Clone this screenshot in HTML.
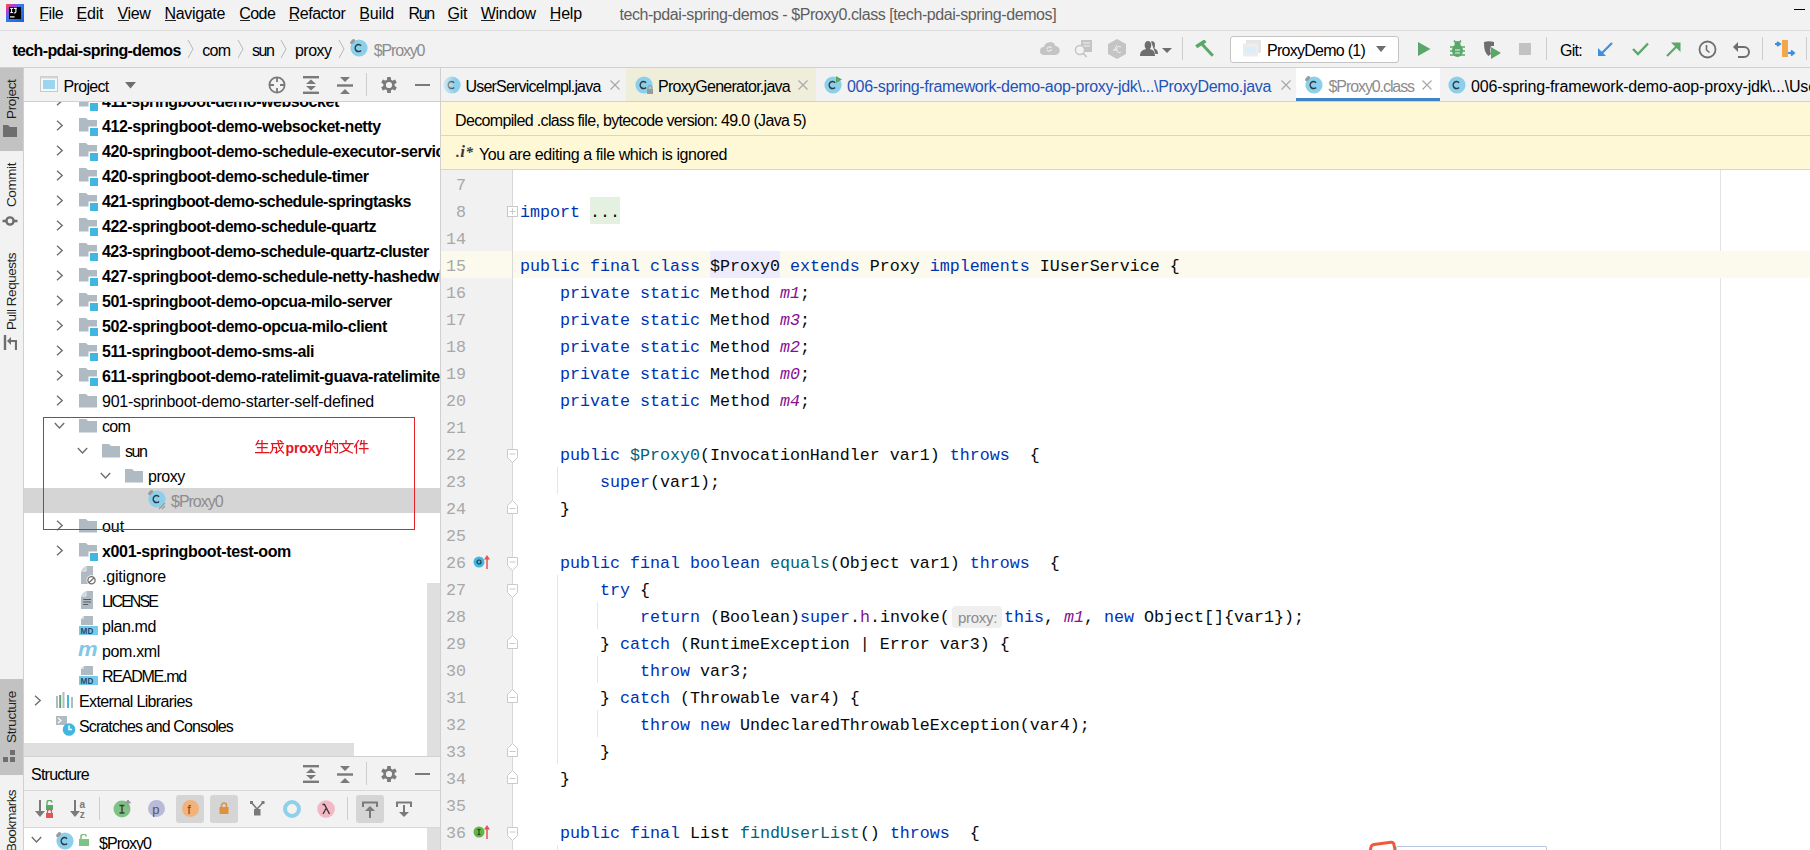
<!DOCTYPE html>
<html><head><meta charset="utf-8"><title>IntelliJ</title>
<style>
html,body{margin:0;padding:0;width:1810px;height:850px;overflow:hidden;background:#F2F2F2;}
body{position:relative;font-family:'Liberation Sans', sans-serif;}
div,svg{position:absolute;}
span{position:static;}
.t{white-space:pre;}
</style></head><body>
<div style="left:0px;top:0px;width:1810px;height:850px;background:#F2F2F2;"></div>
<div style="left:0px;top:30px;width:1810px;height:1px;background:#DCDCDC;"></div>
<div style="left:0px;top:67px;width:1810px;height:1px;background:#D0D0D0;"></div>
<svg style="left:6px;top:4px;" width="18" height="18" viewBox="0 0 18 18">
<defs><linearGradient id="ijg" x1="0" y1="0" x2="1" y2="1">
<stop offset="0" stop-color="#FF5A2A"/><stop offset="0.22" stop-color="#B83BD2"/><stop offset="0.45" stop-color="#3479EE"/><stop offset="1" stop-color="#1A5FE6"/></linearGradient></defs>
<rect x="0" y="0" width="18" height="18" fill="url(#ijg)"/>
<rect x="3" y="3" width="12" height="12" fill="#000"/>
<path d="M4.2,4.4 h2.8 M5.6,4.4 v4.4 M4.2,8.6 h2.8" stroke="#fff" stroke-width="1"/>
<path d="M7.8,4.4 h3 M9.9,4.4 v3.4 q0,1.2 -1.2,1.2 h-1" stroke="#fff" stroke-width="1.1" fill="none"/>
<rect x="4" y="12.3" width="4.6" height="1.2" fill="#fff"/>
</svg>
<div class="t" style="left:39.3px;top:3.96px;font:normal 400 16px/20px 'Liberation Sans', sans-serif;color:#000;letter-spacing:-0.470px;">File</div>
<div class="t" style="left:76.6px;top:3.96px;font:normal 400 16px/20px 'Liberation Sans', sans-serif;color:#000;letter-spacing:-0.220px;">Edit</div>
<div class="t" style="left:117.5px;top:3.96px;font:normal 400 16px/20px 'Liberation Sans', sans-serif;color:#000;letter-spacing:-0.348px;">View</div>
<div class="t" style="left:164.4px;top:3.96px;font:normal 400 16px/20px 'Liberation Sans', sans-serif;color:#000;letter-spacing:-0.307px;">Navigate</div>
<div class="t" style="left:239.3px;top:3.96px;font:normal 400 16px/20px 'Liberation Sans', sans-serif;color:#000;letter-spacing:-0.588px;">Code</div>
<div class="t" style="left:288.7px;top:3.96px;font:normal 400 16px/20px 'Liberation Sans', sans-serif;color:#000;letter-spacing:-0.484px;">Refactor</div>
<div class="t" style="left:359.2px;top:3.96px;font:normal 400 16px/20px 'Liberation Sans', sans-serif;color:#000;letter-spacing:-0.136px;">Build</div>
<div class="t" style="left:408.5px;top:3.96px;font:normal 400 16px/20px 'Liberation Sans', sans-serif;color:#000;letter-spacing:-1.320px;">Run</div>
<div class="t" style="left:447.5px;top:3.96px;font:normal 400 16px/20px 'Liberation Sans', sans-serif;color:#000;letter-spacing:-0.284px;">Git</div>
<div class="t" style="left:480.7px;top:3.96px;font:normal 400 16px/20px 'Liberation Sans', sans-serif;color:#000;letter-spacing:-0.284px;">Window</div>
<div class="t" style="left:549.8px;top:3.96px;font:normal 400 16px/20px 'Liberation Sans', sans-serif;color:#000;letter-spacing:-0.202px;">Help</div>
<div style="left:40px;top:20px;width:8px;height:1px;background:#222;"></div>
<div style="left:77px;top:20px;width:9px;height:1px;background:#222;"></div>
<div style="left:118px;top:20px;width:11px;height:1px;background:#222;"></div>
<div style="left:165px;top:20px;width:11px;height:1px;background:#222;"></div>
<div style="left:240px;top:20px;width:10px;height:1px;background:#222;"></div>
<div style="left:289px;top:20px;width:9px;height:1px;background:#222;"></div>
<div style="left:360px;top:20px;width:9px;height:1px;background:#222;"></div>
<div style="left:419px;top:20px;width:7px;height:1px;background:#222;"></div>
<div style="left:448px;top:20px;width:10px;height:1px;background:#222;"></div>
<div style="left:481px;top:20px;width:14px;height:1px;background:#222;"></div>
<div style="left:550px;top:20px;width:10px;height:1px;background:#222;"></div>
<div class="t" style="left:619.4px;top:4.66px;font:normal 400 16px/20px 'Liberation Sans', sans-serif;color:#5E5E5E;letter-spacing:-0.421px;">tech-pdai-spring-demos - $Proxy0.class [tech-pdai-spring-demos]</div>
<div style="left:1794px;top:9px;width:11px;height:1px;background:#000;"></div>
<div class="t" style="left:12.4px;top:40.66px;font:normal 700 16px/20px 'Liberation Sans', sans-serif;color:#000;letter-spacing:-0.633px;">tech-pdai-spring-demos</div>
<svg style="left:187px;top:39px;" width="7" height="20" viewBox="0 0 7 20"><polyline points="1,1 6,10 1,19" fill="none" stroke="#B8B8B8" stroke-width="1"/></svg>
<svg style="left:237px;top:39px;" width="7" height="20" viewBox="0 0 7 20"><polyline points="1,1 6,10 1,19" fill="none" stroke="#B8B8B8" stroke-width="1"/></svg>
<svg style="left:280px;top:39px;" width="7" height="20" viewBox="0 0 7 20"><polyline points="1,1 6,10 1,19" fill="none" stroke="#B8B8B8" stroke-width="1"/></svg>
<svg style="left:338px;top:39px;" width="7" height="20" viewBox="0 0 7 20"><polyline points="1,1 6,10 1,19" fill="none" stroke="#B8B8B8" stroke-width="1"/></svg>
<div class="t" style="left:202.2px;top:40.66px;font:normal 400 16px/20px 'Liberation Sans', sans-serif;color:#000;letter-spacing:-0.678px;">com</div>
<div class="t" style="left:252px;top:40.66px;font:normal 400 16px/20px 'Liberation Sans', sans-serif;color:#000;letter-spacing:-1.432px;">sun</div>
<div class="t" style="left:295px;top:40.66px;font:normal 400 16px/20px 'Liberation Sans', sans-serif;color:#000;letter-spacing:-0.525px;">proxy</div>
<div class="t" style="left:373.8px;top:40.66px;font:normal 400 16px/20px 'Liberation Sans', sans-serif;color:#8C8C8C;letter-spacing:-1.172px;">$Proxy0</div>
<svg style="left:349.7px;top:39px;opacity:1.0" width="19" height="19" viewBox="0 0 19 19"><circle cx="9.0" cy="9.0" r="8.6" fill="#8BCFEA"/><path d="M11.0,6.8 A3.3,3.5 0 1 0 11.0,11.4" fill="none" stroke="#2F3A42" stroke-width="1.5"/><ellipse cx="2.6" cy="2.6" rx="3" ry="1.7" transform="rotate(-45 2.6 2.6)" fill="#9A9A9A"/></svg>
<svg style="left:1039px;top:41px;" width="21" height="15" viewBox="0 0 21 15"><path d="M5,14 h11 a4.5,4.5 0 0 0 0.5,-9 a6,6 0 0 0 -11.5,1 a4,4 0 0 0 0,8 z" fill="#C4C4C4"/><path d="M8,8 a2.5,2.5 0 0 1 4.5,-1 M12.5,8 a2.5,2.5 0 0 1 -4.5,1" stroke="#ECECEC" stroke-width="1.2" fill="none"/></svg>
<svg style="left:1074px;top:40px;" width="19" height="18" viewBox="0 0 19 18"><rect x="7" y="0" width="11" height="12" fill="#C4C4C4"/><path d="M9,3 h7 M9,6 h7" stroke="#F2F2F2" stroke-width="1.2"/><circle cx="6" cy="10" r="4.6" fill="#F2F2F2" stroke="#C4C4C4" stroke-width="1.5"/><path d="M9,13 L12.5,17" stroke="#C4C4C4" stroke-width="1.8"/></svg>
<svg style="left:1108px;top:39px;" width="18" height="20" viewBox="0 0 18 20"><path d="M9,0 L18,5 L18,15 L9,20 L0,15 L0,5 Z" fill="#C4C4C4"/><path d="M6,12 L9,6 M5,11 h5 M13,8 a3,3 0 1 0 0,5" stroke="#ECECEC" stroke-width="1" fill="none"/></svg>
<svg style="left:1140px;top:40px;" width="34" height="17" viewBox="0 0 34 17"><path d="M0,16 C0,11 3,10 6,9 C4,7 4,1 8,1 C12,1 12,7 10,9 C13,10 15,11 15,16 Z" fill="#6E6E6E"/><path d="M11,1.5 C14,0.5 16,3 14.5,8.5 C17,9.5 18,11 18,14 L15.5,14" fill="#6E6E6E"/><path d="M22,8 h10 l-5,5 z" fill="#6E6E6E"/></svg>
<div style="left:1182px;top:37px;width:1px;height:23px;background:#CDCDCD;"></div>
<svg style="left:1195px;top:40px;" width="20" height="18" viewBox="0 0 20 18"><path d="M1.2,6.8 L10.5,0.8" stroke="#59A869" stroke-width="3.6"/><path d="M5.5,2.5 L17.8,15.8" stroke="#59A869" stroke-width="3"/></svg>
<div style="left:1229.5px;top:35.5px;width:169px;height:27px;background:#FFFFFF;border:1px solid #C4C4C4;border-radius:3px;box-sizing:border-box"></div>
<svg style="left:1243px;top:40px;" width="18" height="17" viewBox="0 0 18 17"><rect x="3" y="0" width="15" height="13" fill="#E6E6E6"/><rect x="0" y="3.5" width="15" height="13" fill="#EDEDED"/><rect x="2" y="7" width="11" height="7" fill="#DCEEF8"/></svg>
<div class="t" style="left:1267px;top:40.66px;font:normal 400 16px/20px 'Liberation Sans', sans-serif;color:#000;letter-spacing:-0.737px;">ProxyDemo (1)</div>
<svg style="left:1376px;top:46px;" width="10" height="7" viewBox="0 0 10 7"><path d="M0,0 h10 l-5,6 z" fill="#6E6E6E"/></svg>
<svg style="left:1418px;top:42px;" width="13" height="15" viewBox="0 0 13 15"><path d="M0,0 L12.5,7 L0,14 Z" fill="#59A869"/></svg>
<svg style="left:1449px;top:40px;" width="17" height="18" viewBox="0 0 17 18"><ellipse cx="8.5" cy="10.5" rx="5.5" ry="6.5" fill="#59A869"/><circle cx="8.5" cy="4" r="3" fill="#59A869"/><path d="M1,7 h15 M1,11 h15 M1,15 h15 M5,0.5 l2,2.5 M12,0.5 l-2,2.5" stroke="#59A869" stroke-width="1.6"/><path d="M6,10 h5 M6,13 h5" stroke="#F2F2F2" stroke-width="1.2"/></svg>
<svg style="left:1482px;top:41px;" width="20" height="19" viewBox="0 0 20 19"><path d="M2,1 C5,0 9,0 12,1 L12,5 L9,5 C8,8 8,11 9,13 L6.5,15 C3,12 2,8 2,1 Z" fill="#6E6E6E"/><path d="M9,6 L19,12 L9,18 Z" fill="#59A869"/></svg>
<div style="left:1519px;top:43px;width:12px;height:12px;background:#C2C2C2;"></div>
<div style="left:1546px;top:37px;width:1px;height:23px;background:#CDCDCD;"></div>
<div class="t" style="left:1560px;top:40.66px;font:normal 400 16px/20px 'Liberation Sans', sans-serif;color:#000;letter-spacing:-0.723px;">Git:</div>
<svg style="left:1598px;top:42px;" width="15" height="14" viewBox="0 0 15 14"><path d="M14,1 L3,12" stroke="#3C8FE0" stroke-width="2.2"/><path d="M0,6 L0,14 L8,14 Z" fill="#3C8FE0"/></svg>
<svg style="left:1632px;top:42px;" width="17" height="14" viewBox="0 0 17 14"><path d="M1,7 L6,12 L16,1.5" stroke="#59A869" stroke-width="2.4" fill="none"/></svg>
<svg style="left:1666px;top:42px;" width="15" height="15" viewBox="0 0 15 15"><path d="M1,14 L12,3" stroke="#59A869" stroke-width="2.2"/><path d="M5,0.5 L14.5,0.5 L14.5,10 Z" fill="#59A869"/></svg>
<svg style="left:1698px;top:40px;" width="19" height="19" viewBox="0 0 19 19"><circle cx="9.5" cy="9.5" r="8" fill="none" stroke="#6E6E6E" stroke-width="1.8"/><path d="M8.5,5 L8.5,10 L11.5,12.5" stroke="#6E6E6E" stroke-width="1.6" fill="none"/></svg>
<svg style="left:1733px;top:41px;" width="18" height="17" viewBox="0 0 18 17"><path d="M4,6 L11,6 A5,5 0 0 1 11,16 L5,16" fill="none" stroke="#6E6E6E" stroke-width="2"/><path d="M0,6 L5,1 L5,11 Z" fill="#6E6E6E"/></svg>
<div style="left:1762px;top:37px;width:1px;height:23px;background:#CDCDCD;"></div>
<svg style="left:1775px;top:40px;" width="21" height="18" viewBox="0 0 21 18"><rect x="7" y="0" width="6" height="17" fill="#F0A84B"/><path d="M0,4 h4 M2,2 l3,2 -3,2" stroke="#3C8FE0" stroke-width="2" fill="none"/><path d="M13,13 h5 M16,10.5 l3,2.5 -3,2.5" stroke="#3C8FE0" stroke-width="2" fill="none"/></svg>
<div style="left:1806px;top:37px;width:1px;height:23px;background:#CDCDCD;"></div>
<div style="left:23px;top:68px;width:1px;height:782px;background:#D0D0D0;"></div>
<div style="left:0px;top:68px;width:23px;height:83px;background:#C2C2C2;"></div>
<div style="left:0px;top:679px;width:23px;height:96px;background:#C2C2C2;"></div>
<div class="t" style="left:12.02225px;top:118.50px;font:normal 400 13.5px/16px 'Liberation Sans', sans-serif;color:#1E1E1E;letter-spacing:-0.362px;transform-origin:0 0;transform:rotate(-90deg) translate(0,-8px)">Project</div>
<div class="t" style="left:12.02225px;top:207.00px;font:normal 400 13.5px/16px 'Liberation Sans', sans-serif;color:#1E1E1E;letter-spacing:-0.417px;transform-origin:0 0;transform:rotate(-90deg) translate(0,-8px)">Commit</div>
<div class="t" style="left:12.02225px;top:330.00px;font:normal 400 13.5px/16px 'Liberation Sans', sans-serif;color:#1E1E1E;letter-spacing:-0.484px;transform-origin:0 0;transform:rotate(-90deg) translate(0,-8px)">Pull Requests</div>
<div class="t" style="left:12.02225px;top:743.00px;font:normal 400 13.5px/16px 'Liberation Sans', sans-serif;color:#1E1E1E;letter-spacing:-0.309px;transform-origin:0 0;transform:rotate(-90deg) translate(0,-8px)">Structure</div>
<div class="t" style="left:12.02225px;top:852.00px;font:normal 400 13.5px/16px 'Liberation Sans', sans-serif;color:#1E1E1E;letter-spacing:-0.615px;transform-origin:0 0;transform:rotate(-90deg) translate(0,-8px)">Bookmarks</div>
<svg style="left:3px;top:125px;" width="14" height="12" viewBox="0 0 14 12"><path d="M0,0 h5 l2,2 h7 v10 h-14 z" fill="#6E6E6E"/></svg>
<svg style="left:2px;top:214px;" width="16" height="14" viewBox="0 0 16 14"><circle cx="8" cy="7" r="3.6" fill="none" stroke="#6E6E6E" stroke-width="2.4"/><path d="M0.5,7 h4 M11.5,7 h4" stroke="#6E6E6E" stroke-width="2.4"/></svg>
<svg style="left:3px;top:335px;" width="14" height="15" viewBox="0 0 14 15"><path d="M2,0 v15" stroke="#6E6E6E" stroke-width="2.4"/><path d="M5,6 h8 v9" stroke="#6E6E6E" stroke-width="2.2" fill="none"/><path d="M4,6 l4,-4 v8 z" fill="#6E6E6E"/></svg>
<svg style="left:3px;top:750px;" width="14" height="13" viewBox="0 0 14 13"><rect x="7" y="0" width="5" height="5" fill="#6E6E6E"/><rect x="0" y="7" width="5" height="5" fill="#6E6E6E"/><rect x="7" y="7" width="5" height="5" fill="#6E6E6E"/></svg>
<div style="left:24px;top:101px;width:416px;height:1px;background:#D0D0D0;"></div>
<div style="left:24px;top:102px;width:416px;height:654px;background:#FFFFFF;"></div>
<div style="left:440px;top:68px;width:1px;height:782px;background:#D0D0D0;"></div>
<svg style="left:40px;top:76px;" width="19" height="17" viewBox="0 0 19 17"><rect x="0.5" y="0.5" width="17" height="15" fill="#F7F7F7" stroke="#C9C9C9"/><rect x="0.5" y="0.5" width="17" height="2" fill="#D5D5D5"/><rect x="3" y="4" width="12" height="9" fill="#9BD5EF"/></svg>
<div class="t" style="left:63.5px;top:76.66px;font:normal 400 16px/20px 'Liberation Sans', sans-serif;color:#000;letter-spacing:-0.671px;">Project</div>
<svg style="left:124.5px;top:82px;" width="11" height="7" viewBox="0 0 11 7"><path d="M0,0 h11 l-5.5,6.5 z" fill="#6E6E6E"/></svg>
<svg style="left:268px;top:76px;" width="18" height="18" viewBox="0 0 18 18"><circle cx="9" cy="9" r="7.6" fill="none" stroke="#7A7A7A" stroke-width="1.8"/><path d="M9,1 v5 M9,12 v5 M1,9 h5 M12,9 h5" stroke="#7A7A7A" stroke-width="1.8"/></svg>
<svg style="left:303px;top:76px;" width="16" height="18" viewBox="0 0 16 18"><rect x="0" y="0" width="16" height="2.4" fill="#7A7A7A"/><rect x="0" y="15.6" width="16" height="2.4" fill="#7A7A7A"/><path d="M3,8 L8,3.5 L13,8 Z M3,10 L8,14.5 L13,10 Z" fill="#7A7A7A"/></svg>
<svg style="left:337px;top:77px;" width="16" height="17" viewBox="0 0 16 17"><rect x="0" y="7.3" width="16" height="2.4" fill="#7A7A7A"/><path d="M3,0 L13,0 L8,5 Z M3,17 L8,12 L13,17 Z" fill="#7A7A7A"/></svg>
<div style="left:366px;top:73px;width:1px;height:23px;background:#CDCDCD;"></div>
<svg style="left:381px;top:77px;" width="16" height="16" viewBox="0 0 16 16"><g transform="translate(8,8)" fill="#7A7A7A"><rect x="-1.9" y="-8" width="3.8" height="4.5" rx="0.6" transform="rotate(0)"/><rect x="-1.9" y="-8" width="3.8" height="4.5" rx="0.6" transform="rotate(60)"/><rect x="-1.9" y="-8" width="3.8" height="4.5" rx="0.6" transform="rotate(120)"/><rect x="-1.9" y="-8" width="3.8" height="4.5" rx="0.6" transform="rotate(180)"/><rect x="-1.9" y="-8" width="3.8" height="4.5" rx="0.6" transform="rotate(240)"/><rect x="-1.9" y="-8" width="3.8" height="4.5" rx="0.6" transform="rotate(300)"/><circle r="5.7"/></g><circle cx="8" cy="8" r="3.1" fill="#F2F2F2"/></svg>
<div style="left:415px;top:84px;width:15px;height:2.4px;background:#7A7A7A;"></div>
<div style="left:24px;top:488px;width:416px;height:25px;background:#D5D5D5;"></div>
<div style="left:24px;top:102px;width:416px;height:641px;overflow:hidden">
<svg style="left:31.799999999999997px;top:-7px;" width="8" height="11" viewBox="0 0 8 11"><polyline points="1,0.8 6.2,5.5 1,10.2" fill="none" stroke="#6E6E6E" stroke-width="1.4"/></svg>
<svg style="left:55px;top:-9.5px;" width="20" height="18" viewBox="0 0 20 18"><path d="M0,0 h7 l2,2 h9 v11.5 h-18 z" fill="#AFBAC2"/><rect x="9.5" y="8.5" width="10" height="9.5" fill="#FFFFFF"/><rect x="11" y="10" width="8" height="8" fill="#40B6E0"/></svg>
<div class="t" style="left:78px;top:-9.84px;font:normal 700 16px/20px 'Liberation Sans', sans-serif;color:#000;letter-spacing:-0.450px;white-space:pre">411-springboot-demo-websocket</div>
<svg style="left:31.799999999999997px;top:18px;" width="8" height="11" viewBox="0 0 8 11"><polyline points="1,0.8 6.2,5.5 1,10.2" fill="none" stroke="#6E6E6E" stroke-width="1.4"/></svg>
<svg style="left:55px;top:15.5px;" width="20" height="18" viewBox="0 0 20 18"><path d="M0,0 h7 l2,2 h9 v11.5 h-18 z" fill="#AFBAC2"/><rect x="9.5" y="8.5" width="10" height="9.5" fill="#FFFFFF"/><rect x="11" y="10" width="8" height="8" fill="#40B6E0"/></svg>
<div class="t" style="left:78px;top:15.16px;font:normal 700 16px/20px 'Liberation Sans', sans-serif;color:#000;letter-spacing:-0.448px;white-space:pre">412-springboot-demo-websocket-netty</div>
<svg style="left:31.799999999999997px;top:43px;" width="8" height="11" viewBox="0 0 8 11"><polyline points="1,0.8 6.2,5.5 1,10.2" fill="none" stroke="#6E6E6E" stroke-width="1.4"/></svg>
<svg style="left:55px;top:40.5px;" width="20" height="18" viewBox="0 0 20 18"><path d="M0,0 h7 l2,2 h9 v11.5 h-18 z" fill="#AFBAC2"/><rect x="9.5" y="8.5" width="10" height="9.5" fill="#FFFFFF"/><rect x="11" y="10" width="8" height="8" fill="#40B6E0"/></svg>
<div class="t" style="left:78px;top:40.16px;font:normal 700 16px/20px 'Liberation Sans', sans-serif;color:#000;letter-spacing:-0.450px;white-space:pre">420-springboot-demo-schedule-executor-service</div>
<svg style="left:31.799999999999997px;top:68px;" width="8" height="11" viewBox="0 0 8 11"><polyline points="1,0.8 6.2,5.5 1,10.2" fill="none" stroke="#6E6E6E" stroke-width="1.4"/></svg>
<svg style="left:55px;top:65.5px;" width="20" height="18" viewBox="0 0 20 18"><path d="M0,0 h7 l2,2 h9 v11.5 h-18 z" fill="#AFBAC2"/><rect x="9.5" y="8.5" width="10" height="9.5" fill="#FFFFFF"/><rect x="11" y="10" width="8" height="8" fill="#40B6E0"/></svg>
<div class="t" style="left:78px;top:65.16px;font:normal 700 16px/20px 'Liberation Sans', sans-serif;color:#000;letter-spacing:-0.480px;white-space:pre">420-springboot-demo-schedule-timer</div>
<svg style="left:31.799999999999997px;top:93px;" width="8" height="11" viewBox="0 0 8 11"><polyline points="1,0.8 6.2,5.5 1,10.2" fill="none" stroke="#6E6E6E" stroke-width="1.4"/></svg>
<svg style="left:55px;top:90.5px;" width="20" height="18" viewBox="0 0 20 18"><path d="M0,0 h7 l2,2 h9 v11.5 h-18 z" fill="#AFBAC2"/><rect x="9.5" y="8.5" width="10" height="9.5" fill="#FFFFFF"/><rect x="11" y="10" width="8" height="8" fill="#40B6E0"/></svg>
<div class="t" style="left:78px;top:90.16px;font:normal 700 16px/20px 'Liberation Sans', sans-serif;color:#000;letter-spacing:-0.615px;white-space:pre">421-springboot-demo-schedule-springtasks</div>
<svg style="left:31.799999999999997px;top:118px;" width="8" height="11" viewBox="0 0 8 11"><polyline points="1,0.8 6.2,5.5 1,10.2" fill="none" stroke="#6E6E6E" stroke-width="1.4"/></svg>
<svg style="left:55px;top:115.5px;" width="20" height="18" viewBox="0 0 20 18"><path d="M0,0 h7 l2,2 h9 v11.5 h-18 z" fill="#AFBAC2"/><rect x="9.5" y="8.5" width="10" height="9.5" fill="#FFFFFF"/><rect x="11" y="10" width="8" height="8" fill="#40B6E0"/></svg>
<div class="t" style="left:78px;top:115.16px;font:normal 700 16px/20px 'Liberation Sans', sans-serif;color:#000;letter-spacing:-0.502px;white-space:pre">422-springboot-demo-schedule-quartz</div>
<svg style="left:31.799999999999997px;top:143px;" width="8" height="11" viewBox="0 0 8 11"><polyline points="1,0.8 6.2,5.5 1,10.2" fill="none" stroke="#6E6E6E" stroke-width="1.4"/></svg>
<svg style="left:55px;top:140.5px;" width="20" height="18" viewBox="0 0 20 18"><path d="M0,0 h7 l2,2 h9 v11.5 h-18 z" fill="#AFBAC2"/><rect x="9.5" y="8.5" width="10" height="9.5" fill="#FFFFFF"/><rect x="11" y="10" width="8" height="8" fill="#40B6E0"/></svg>
<div class="t" style="left:78px;top:140.16px;font:normal 700 16px/20px 'Liberation Sans', sans-serif;color:#000;letter-spacing:-0.530px;white-space:pre">423-springboot-demo-schedule-quartz-cluster</div>
<svg style="left:31.799999999999997px;top:168px;" width="8" height="11" viewBox="0 0 8 11"><polyline points="1,0.8 6.2,5.5 1,10.2" fill="none" stroke="#6E6E6E" stroke-width="1.4"/></svg>
<svg style="left:55px;top:165.5px;" width="20" height="18" viewBox="0 0 20 18"><path d="M0,0 h7 l2,2 h9 v11.5 h-18 z" fill="#AFBAC2"/><rect x="9.5" y="8.5" width="10" height="9.5" fill="#FFFFFF"/><rect x="11" y="10" width="8" height="8" fill="#40B6E0"/></svg>
<div class="t" style="left:78px;top:165.16px;font:normal 700 16px/20px 'Liberation Sans', sans-serif;color:#000;letter-spacing:-0.450px;white-space:pre">427-springboot-demo-schedule-netty-hashedwheeltimer</div>
<svg style="left:31.799999999999997px;top:193px;" width="8" height="11" viewBox="0 0 8 11"><polyline points="1,0.8 6.2,5.5 1,10.2" fill="none" stroke="#6E6E6E" stroke-width="1.4"/></svg>
<svg style="left:55px;top:190.5px;" width="20" height="18" viewBox="0 0 20 18"><path d="M0,0 h7 l2,2 h9 v11.5 h-18 z" fill="#AFBAC2"/><rect x="9.5" y="8.5" width="10" height="9.5" fill="#FFFFFF"/><rect x="11" y="10" width="8" height="8" fill="#40B6E0"/></svg>
<div class="t" style="left:78px;top:190.16px;font:normal 700 16px/20px 'Liberation Sans', sans-serif;color:#000;letter-spacing:-0.481px;white-space:pre">501-springboot-demo-opcua-milo-server</div>
<svg style="left:31.799999999999997px;top:218px;" width="8" height="11" viewBox="0 0 8 11"><polyline points="1,0.8 6.2,5.5 1,10.2" fill="none" stroke="#6E6E6E" stroke-width="1.4"/></svg>
<svg style="left:55px;top:215.5px;" width="20" height="18" viewBox="0 0 20 18"><path d="M0,0 h7 l2,2 h9 v11.5 h-18 z" fill="#AFBAC2"/><rect x="9.5" y="8.5" width="10" height="9.5" fill="#FFFFFF"/><rect x="11" y="10" width="8" height="8" fill="#40B6E0"/></svg>
<div class="t" style="left:78px;top:215.16px;font:normal 700 16px/20px 'Liberation Sans', sans-serif;color:#000;letter-spacing:-0.447px;white-space:pre">502-springboot-demo-opcua-milo-client</div>
<svg style="left:31.799999999999997px;top:243px;" width="8" height="11" viewBox="0 0 8 11"><polyline points="1,0.8 6.2,5.5 1,10.2" fill="none" stroke="#6E6E6E" stroke-width="1.4"/></svg>
<svg style="left:55px;top:240.5px;" width="20" height="18" viewBox="0 0 20 18"><path d="M0,0 h7 l2,2 h9 v11.5 h-18 z" fill="#AFBAC2"/><rect x="9.5" y="8.5" width="10" height="9.5" fill="#FFFFFF"/><rect x="11" y="10" width="8" height="8" fill="#40B6E0"/></svg>
<div class="t" style="left:78px;top:240.16px;font:normal 700 16px/20px 'Liberation Sans', sans-serif;color:#000;letter-spacing:-0.413px;white-space:pre">511-springboot-demo-sms-ali</div>
<svg style="left:31.799999999999997px;top:268px;" width="8" height="11" viewBox="0 0 8 11"><polyline points="1,0.8 6.2,5.5 1,10.2" fill="none" stroke="#6E6E6E" stroke-width="1.4"/></svg>
<svg style="left:55px;top:265.5px;" width="20" height="18" viewBox="0 0 20 18"><path d="M0,0 h7 l2,2 h9 v11.5 h-18 z" fill="#AFBAC2"/><rect x="9.5" y="8.5" width="10" height="9.5" fill="#FFFFFF"/><rect x="11" y="10" width="8" height="8" fill="#40B6E0"/></svg>
<div class="t" style="left:78px;top:265.16px;font:normal 700 16px/20px 'Liberation Sans', sans-serif;color:#000;letter-spacing:-0.450px;white-space:pre">611-springboot-demo-ratelimit-guava-ratelimiter</div>
<svg style="left:31.799999999999997px;top:293px;" width="8" height="11" viewBox="0 0 8 11"><polyline points="1,0.8 6.2,5.5 1,10.2" fill="none" stroke="#6E6E6E" stroke-width="1.4"/></svg>
<svg style="left:55px;top:291.5px;" width="20" height="18" viewBox="0 0 20 18"><path d="M0,0 h7 l2,2 h9 v11.5 h-18 z" fill="#AFBAC2"/></svg>
<div class="t" style="left:78px;top:290.16px;font:normal 400 16px/20px 'Liberation Sans', sans-serif;color:#000;letter-spacing:-0.254px;white-space:pre">901-sprinboot-demo-starter-self-defined</div>
<svg style="left:30px;top:320px;" width="12" height="8" viewBox="0 0 12 8"><polyline points="0.8,1 5.5,6 10.2,1" fill="none" stroke="#6E6E6E" stroke-width="1.4"/></svg>
<svg style="left:55px;top:316.5px;" width="20" height="18" viewBox="0 0 20 18"><path d="M0,0 h7 l2,2 h9 v11.5 h-18 z" fill="#AFBAC2"/></svg>
<div class="t" style="left:78px;top:315.16px;font:normal 400 16px/20px 'Liberation Sans', sans-serif;color:#000;letter-spacing:-0.745px;white-space:pre">com</div>
<svg style="left:53px;top:345px;" width="12" height="8" viewBox="0 0 12 8"><polyline points="0.8,1 5.5,6 10.2,1" fill="none" stroke="#6E6E6E" stroke-width="1.4"/></svg>
<svg style="left:78px;top:341.5px;" width="20" height="18" viewBox="0 0 20 18"><path d="M0,0 h7 l2,2 h9 v11.5 h-18 z" fill="#AFBAC2"/></svg>
<div class="t" style="left:101px;top:340.16px;font:normal 400 16px/20px 'Liberation Sans', sans-serif;color:#000;letter-spacing:-1.432px;white-space:pre">sun</div>
<svg style="left:76px;top:370px;" width="12" height="8" viewBox="0 0 12 8"><polyline points="0.8,1 5.5,6 10.2,1" fill="none" stroke="#6E6E6E" stroke-width="1.4"/></svg>
<svg style="left:101px;top:366.5px;" width="20" height="18" viewBox="0 0 20 18"><path d="M0,0 h7 l2,2 h9 v11.5 h-18 z" fill="#AFBAC2"/></svg>
<div class="t" style="left:124px;top:365.16px;font:normal 400 16px/20px 'Liberation Sans', sans-serif;color:#000;letter-spacing:-0.485px;white-space:pre">proxy</div>
<svg style="left:123.5px;top:388px;opacity:1.0" width="19" height="19" viewBox="0 0 19 19"><circle cx="9.0" cy="9.0" r="8.6" fill="#8BCFEA"/><path d="M11.0,6.8 A3.3,3.5 0 1 0 11.0,11.4" fill="none" stroke="#2F3A42" stroke-width="1.5"/><ellipse cx="2.6" cy="2.6" rx="3" ry="1.7" transform="rotate(-45 2.6 2.6)" fill="#9A9A9A"/></svg>
<svg style="left:134px;top:400px;" width="8" height="8" viewBox="0 0 8 8"><path d="M1,7 L7,1 M4,7 L7,4" stroke="#9A9A9A" stroke-width="1.3"/></svg>
<div class="t" style="left:147px;top:390.16px;font:normal 400 16px/20px 'Liberation Sans', sans-serif;color:#8C8C8C;letter-spacing:-1.015px;white-space:pre">$Proxy0</div>
<svg style="left:31.799999999999997px;top:418px;" width="8" height="11" viewBox="0 0 8 11"><polyline points="1,0.8 6.2,5.5 1,10.2" fill="none" stroke="#6E6E6E" stroke-width="1.4"/></svg>
<svg style="left:55px;top:416.5px;" width="20" height="18" viewBox="0 0 20 18"><path d="M0,0 h7 l2,2 h9 v11.5 h-18 z" fill="#AFBAC2"/></svg>
<div class="t" style="left:78px;top:415.16px;font:normal 400 16px/20px 'Liberation Sans', sans-serif;color:#000;letter-spacing:-0.083px;white-space:pre">out</div>
<svg style="left:31.799999999999997px;top:443px;" width="8" height="11" viewBox="0 0 8 11"><polyline points="1,0.8 6.2,5.5 1,10.2" fill="none" stroke="#6E6E6E" stroke-width="1.4"/></svg>
<svg style="left:55px;top:440.5px;" width="20" height="18" viewBox="0 0 20 18"><path d="M0,0 h7 l2,2 h9 v11.5 h-18 z" fill="#AFBAC2"/><rect x="9.5" y="8.5" width="10" height="9.5" fill="#FFFFFF"/><rect x="11" y="10" width="8" height="8" fill="#40B6E0"/></svg>
<div class="t" style="left:78px;top:440.16px;font:normal 700 16px/20px 'Liberation Sans', sans-serif;color:#000;letter-spacing:-0.348px;white-space:pre">x001-springboot-test-oom</div>
<svg style="left:57px;top:464px;" width="18" height="20" viewBox="0 0 18 20"><path d="M0,5 L5,0 L12,0 L12,18 L0,18 Z" fill="#AFBAC2"/><path d="M0,4.2 L4.2,0 L4.2,4.2 Z" fill="#D0D6DB"/><path d="M0,5 h5 v-5" stroke="#FFFFFF" stroke-width="0.8" fill="none"/><circle cx="10.5" cy="14.3" r="5" fill="#FFFFFF"/><circle cx="10.5" cy="14.3" r="3.6" fill="none" stroke="#6E6E6E" stroke-width="1.3"/><path d="M8,16.8 L13,11.8" stroke="#6E6E6E" stroke-width="1.3"/></svg>
<div class="t" style="left:78px;top:465.16px;font:normal 400 16px/20px 'Liberation Sans', sans-serif;color:#000;letter-spacing:-0.183px;white-space:pre">.gitignore</div>
<svg style="left:57px;top:489px;" width="14" height="20" viewBox="0 0 14 20"><path d="M0,5 L5,0 L12,0 L12,18 L0,18 Z" fill="#AFBAC2"/><path d="M0,4.2 L4.2,0 L4.2,4.2 Z" fill="#D0D6DB"/><path d="M0,5 h5 v-5" stroke="#FFFFFF" stroke-width="0.8" fill="none"/><path d="M2.2,8.5 h7.8 M2.2,11 h7.8 M2.2,13.5 h5" stroke="#555C63" stroke-width="1.1"/></svg>
<div class="t" style="left:78px;top:490.16px;font:normal 400 16px/20px 'Liberation Sans', sans-serif;color:#000;letter-spacing:-1.924px;white-space:pre">LICENSE</div>
<svg style="left:54px;top:514px;" width="21" height="19" viewBox="0 0 21 19"><path d="M3,3 L6,0 L15,0 L15,9 L3,9 Z" fill="#AFBAC2"/><path d="M3,3 L6,0 L6,3 Z" fill="#D8DDE1"/><rect x="1" y="10" width="19" height="9" fill="#5FC1E6" opacity="0.85"/><text x="2.6" y="17.8" font-family="Liberation Sans" font-size="8.2" font-weight="700" fill="#2B4A66">MD</text></svg>
<div class="t" style="left:78px;top:515.16px;font:normal 400 16px/20px 'Liberation Sans', sans-serif;color:#000;letter-spacing:-0.417px;white-space:pre">plan.md</div>
<svg style="left:54px;top:540px;" width="21" height="16" viewBox="0 0 21 16"><text x="0" y="13.5" font-family="Liberation Sans" font-style="italic" font-weight="700" font-size="21" fill="#7FC8E8" transform="scale(1.05,1)">m</text></svg>
<div class="t" style="left:78px;top:540.16px;font:normal 400 16px/20px 'Liberation Sans', sans-serif;color:#000;letter-spacing:-0.350px;white-space:pre">pom.xml</div>
<svg style="left:54px;top:564px;" width="21" height="19" viewBox="0 0 21 19"><path d="M3,3 L6,0 L15,0 L15,9 L3,9 Z" fill="#AFBAC2"/><path d="M3,3 L6,0 L6,3 Z" fill="#D8DDE1"/><rect x="1" y="10" width="19" height="9" fill="#5FC1E6" opacity="0.85"/><text x="2.6" y="17.8" font-family="Liberation Sans" font-size="8.2" font-weight="700" fill="#2B4A66">MD</text></svg>
<div class="t" style="left:78px;top:565.16px;font:normal 400 16px/20px 'Liberation Sans', sans-serif;color:#000;letter-spacing:-1.236px;white-space:pre">README.md</div>
<svg style="left:9.799999999999997px;top:593px;" width="8" height="11" viewBox="0 0 8 11"><polyline points="1,0.8 6.2,5.5 1,10.2" fill="none" stroke="#6E6E6E" stroke-width="1.4"/></svg>
<svg style="left:32px;top:590px;" width="18" height="16" viewBox="0 0 18 16"><path d="M1,4 v12 M7.5,0 v16 M16,5 v11" stroke="#AFBAC2" stroke-width="2"/><path d="M4.2,3 v13" stroke="#59A869" stroke-width="2"/><path d="M12,3 v13" stroke="#40B6E0" stroke-width="2"/></svg>
<div class="t" style="left:55px;top:590.16px;font:normal 400 16px/20px 'Liberation Sans', sans-serif;color:#000;letter-spacing:-0.639px;white-space:pre">External Libraries</div>
<svg style="left:32px;top:614px;" width="20" height="20" viewBox="0 0 20 20"><path d="M0,0 h11 v9 h-11 z" fill="#AFBAC2"/><path d="M2,2 l3,2.5 -3,2.5" stroke="#fff" stroke-width="1.2" fill="none"/><circle cx="13" cy="13.5" r="6.3" fill="#40B6E0"/><path d="M13,9.5 v4 h3" stroke="#fff" stroke-width="1.5" fill="none"/></svg>
<div class="t" style="left:55px;top:615.16px;font:normal 400 16px/20px 'Liberation Sans', sans-serif;color:#000;letter-spacing:-0.884px;white-space:pre">Scratches and Consoles</div>
</div>
<div style="left:427px;top:583px;width:13px;height:173px;background:#DFDFDF;"></div>
<div style="left:24px;top:743px;width:330px;height:13px;background:#DFDFDF;"></div>
<svg style="left:254.5px;top:440px;" width="15" height="14" viewBox="0 0 15 14"><path d="M3.5,0.5 L1,5 M2,3.5 H12.5 M7,0.5 V12.5 M2.5,7.5 H12 M0.5,12.5 H14" fill="none" stroke="#E5141E" stroke-width="1.25" stroke-linecap="square"/></svg>
<svg style="left:270px;top:440px;" width="15" height="14" viewBox="0 0 15 14"><path d="M1.5,3.5 H13.5 M2.5,3.5 V9 Q2.5,11 0.5,13 M2.5,7.5 H6.5 V12 L5.5,12.5 M8,0.5 Q8.5,9 13.5,13 M12.5,6 Q10,11 6.5,13 M10,0.5 L12,2" fill="none" stroke="#E5141E" stroke-width="1.25" stroke-linecap="square"/></svg>
<div class="t" style="left:285.5px;top:438.35px;font:normal 700 14px/20px 'Liberation Sans', sans-serif;color:#E5141E;letter-spacing:-0.125px;">proxy</div>
<svg style="left:324px;top:440px;" width="15" height="14" viewBox="0 0 15 14"><path d="M3.5,0.5 L2.5,3 M1.5,3.5 V12.5 M1.5,3.5 H6.5 V12.5 M1.5,7.5 H6.5 M1.5,12 H6.5 M9.5,0.5 L8,5 M8.5,3.5 H13.5 V12 Q13.5,13 11,12.5 M10,6.5 L11.5,8.5" fill="none" stroke="#E5141E" stroke-width="1.25" stroke-linecap="square"/></svg>
<svg style="left:339px;top:440px;" width="15" height="14" viewBox="0 0 15 14"><path d="M7,0.5 V2.5 M0.5,3.5 H14 M3.5,4 Q6,11 13.5,13 M11,4 Q8.5,11 0.5,13" fill="none" stroke="#E5141E" stroke-width="1.25" stroke-linecap="square"/></svg>
<svg style="left:354px;top:440px;" width="15" height="14" viewBox="0 0 15 14"><path d="M4.5,0.5 L0.5,7 M2.5,4 V13 M7.5,0.5 L6.5,4.5 M6.5,3.5 H13 M5.5,8.5 H14 M10,0.5 V13" fill="none" stroke="#E5141E" stroke-width="1.25" stroke-linecap="square"/></svg>
<div style="left:43px;top:417px;width:372px;height:113px;background:transparent;border:1.5px solid #E8202A;box-sizing:border-box"></div>
<div style="left:24px;top:756px;width:416px;height:1px;background:#D0D0D0;"></div>
<div class="t" style="left:31px;top:765.16px;font:normal 400 16px/20px 'Liberation Sans', sans-serif;color:#000;letter-spacing:-0.769px;">Structure</div>
<svg style="left:303px;top:765px;" width="16" height="18" viewBox="0 0 16 18"><rect x="0" y="0" width="16" height="2.4" fill="#7A7A7A"/><rect x="0" y="15.6" width="16" height="2.4" fill="#7A7A7A"/><path d="M3,8 L8,3.5 L13,8 Z M3,10 L8,14.5 L13,10 Z" fill="#7A7A7A"/></svg>
<svg style="left:337px;top:766px;" width="16" height="17" viewBox="0 0 16 17"><rect x="0" y="7.3" width="16" height="2.4" fill="#7A7A7A"/><path d="M3,0 L13,0 L8,5 Z M3,17 L8,12 L13,17 Z" fill="#7A7A7A"/></svg>
<div style="left:366px;top:762px;width:1px;height:23px;background:#CDCDCD;"></div>
<svg style="left:381px;top:766px;" width="16" height="16" viewBox="0 0 16 16"><g transform="translate(8,8)" fill="#7A7A7A"><rect x="-1.9" y="-8" width="3.8" height="4.5" rx="0.6" transform="rotate(0)"/><rect x="-1.9" y="-8" width="3.8" height="4.5" rx="0.6" transform="rotate(60)"/><rect x="-1.9" y="-8" width="3.8" height="4.5" rx="0.6" transform="rotate(120)"/><rect x="-1.9" y="-8" width="3.8" height="4.5" rx="0.6" transform="rotate(180)"/><rect x="-1.9" y="-8" width="3.8" height="4.5" rx="0.6" transform="rotate(240)"/><rect x="-1.9" y="-8" width="3.8" height="4.5" rx="0.6" transform="rotate(300)"/><circle r="5.7"/></g><circle cx="8" cy="8" r="3.1" fill="#F2F2F2"/></svg>
<div style="left:415px;top:773px;width:15px;height:2.4px;background:#7A7A7A;"></div>
<div style="left:24px;top:790px;width:416px;height:1px;background:#D8D8D8;"></div>
<div style="left:24px;top:827px;width:416px;height:1px;background:#D8D8D8;"></div>
<div style="left:24px;top:828px;width:416px;height:22px;background:#FFFFFF;"></div>
<div style="left:427px;top:828px;width:13px;height:22px;background:#DFDFDF;"></div>
<div style="left:176px;top:795px;width:28px;height:28px;background:#D5D5D5;border-radius:3px"></div>
<div style="left:210px;top:795px;width:28px;height:28px;background:#D5D5D5;border-radius:3px"></div>
<div style="left:356px;top:795px;width:28px;height:28px;background:#D5D5D5;border-radius:3px"></div>
<svg style="left:35px;top:800px;" width="19" height="18" viewBox="0 0 19 18"><path d="M5,0 v14" stroke="#7A7A7A" stroke-width="2"/><path d="M0,11 L5,17 L10,11 Z" fill="#7A7A7A"/><rect x="11" y="5" width="7" height="5" fill="#59A869"/><path d="M12,5 v-2 a2.5,2.5 0 0 1 5,-0.5" stroke="#59A869" stroke-width="1.3" fill="none"/><rect x="11" y="13" width="7" height="5" fill="#E05555"/><path d="M12.5,13 v-1.5 a2,2 0 0 1 4,0 v1.5" stroke="#E05555" stroke-width="1.3" fill="none"/></svg>
<svg style="left:70px;top:800px;" width="17" height="18" viewBox="0 0 17 18"><path d="M5,0 v14" stroke="#7A7A7A" stroke-width="2"/><path d="M0,11 L5,17 L10,11 Z" fill="#7A7A7A"/><text x="9.6" y="8.2" font-family="Liberation Sans" font-size="10" font-weight="700" fill="#7A7A7A">a</text><text x="9.8" y="17.8" font-family="Liberation Sans" font-size="10" font-weight="700" fill="#7A7A7A">z</text></svg>
<div style="left:99px;top:797px;width:1px;height:23px;background:#CDCDCD;"></div>
<svg style="left:113px;top:799px;" width="19" height="19" viewBox="0 0 19 19"><circle cx="9" cy="10" r="8.5" fill="#7FC285"/><path d="M6.5,6.5 h5 M9,6.5 v7.5 M6.5,14 h5" stroke="#3D3D3D" stroke-width="1.4"/><path d="M15,1 L17.5,4 L12.5,4 Z M15,3.5 v6" stroke="#9A9A9A" stroke-width="1" fill="#9A9A9A"/></svg>
<svg style="left:147px;top:799px;" width="19" height="19" viewBox="0 0 19 19"><circle cx="9.5" cy="9.5" r="8.5" fill="#B9B9D8"/><text x="5.2" y="14.5" font-family="Liberation Sans" font-size="13" fill="#555">p</text></svg>
<svg style="left:181px;top:799px;" width="19" height="19" viewBox="0 0 19 19"><circle cx="9.5" cy="9.5" r="8.5" fill="#F2B27A"/><text x="6.3" y="14.5" font-family="Liberation Sans" font-size="13" fill="#6A4A30">f</text></svg>
<svg style="left:219px;top:802px;" width="10" height="12" viewBox="0 0 10 12"><rect x="0.5" y="5" width="9" height="7" fill="#E0913A"/><path d="M2.5,5 v-1.5 a2.5,2.5 0 0 1 5,0 v1.5" stroke="#E0913A" stroke-width="1.5" fill="none"/></svg>
<svg style="left:250px;top:801px;" width="15" height="15" viewBox="0 0 15 15"><rect x="0" y="0" width="3" height="3" fill="#7A7A7A"/><rect x="11.5" y="0" width="3" height="3" fill="#7A7A7A"/><path d="M1.5,1.5 L7,8 L13,1.5" stroke="#7A7A7A" stroke-width="1.6" fill="none"/><rect x="4" y="8" width="6.5" height="6.5" fill="#7A7A7A"/></svg>
<svg style="left:283px;top:800px;" width="19" height="19" viewBox="0 0 19 19"><circle cx="9" cy="9" r="7" fill="none" stroke="#8FD1EA" stroke-width="4"/></svg>
<svg style="left:317px;top:800px;" width="19" height="19" viewBox="0 0 19 19"><circle cx="9" cy="9" r="8.8" fill="#F4B8C5"/><path d="M5.5,4.5 L7.5,4.5 L12.5,14 M9,8.5 L6,14" stroke="#333" stroke-width="1.3" fill="none"/></svg>
<div style="left:347px;top:797px;width:1px;height:23px;background:#CDCDCD;"></div>
<svg style="left:362px;top:801px;" width="16" height="17" viewBox="0 0 16 17"><path d="M1,6 v-4.5 h14 v4.5" stroke="#7A7A7A" stroke-width="2" fill="none"/><path d="M8,7 v10" stroke="#7A7A7A" stroke-width="2"/><path d="M3,10 L8,5 L13,10 Z" fill="#7A7A7A"/></svg>
<svg style="left:396px;top:801px;" width="16" height="17" viewBox="0 0 16 17"><path d="M1,6 v-4.5 h14 v4.5" stroke="#7A7A7A" stroke-width="2" fill="none"/><path d="M8,4 v9" stroke="#7A7A7A" stroke-width="2"/><path d="M3,11 L8,16 L13,11 Z" fill="#7A7A7A"/></svg>
<svg style="left:31px;top:836px;" width="12" height="8" viewBox="0 0 12 8"><polyline points="0.8,1 5.5,6 10.2,1" fill="none" stroke="#6E6E6E" stroke-width="1.4"/></svg>
<svg style="left:56px;top:832px;opacity:1.0" width="19" height="19" viewBox="0 0 19 19"><circle cx="9.0" cy="9.0" r="8.6" fill="#8BCFEA"/><path d="M11.0,6.8 A3.3,3.5 0 1 0 11.0,11.4" fill="none" stroke="#2F3A42" stroke-width="1.5"/><ellipse cx="2.6" cy="2.6" rx="3" ry="1.7" transform="rotate(-45 2.6 2.6)" fill="#9A9A9A"/></svg>
<svg style="left:78px;top:834px;" width="12" height="12" viewBox="0 0 12 12"><rect x="1" y="5" width="10" height="7" fill="#7FC285"/><path d="M3,5 v-2 a2.6,2.6 0 0 1 5.2,-0.5" stroke="#7FC285" stroke-width="1.6" fill="none"/></svg>
<div class="t" style="left:99px;top:833.66px;font:normal 400 16px/20px 'Liberation Sans', sans-serif;color:#000;letter-spacing:-0.958px;">$Proxy0</div>
<div style="left:441px;top:101px;width:1369px;height:1px;background:#D0D0D0;"></div>
<div style="left:626px;top:68px;width:190px;height:33px;background:#EFEEDA;"></div>
<div style="left:1296px;top:68px;width:144px;height:33px;background:#FFFFFF;"></div>
<div style="left:1296px;top:98px;width:144px;height:3px;background:#4083C9;"></div>
<svg style="left:443px;top:75.5px;opacity:1.0" width="19" height="19" viewBox="0 0 19 19"><circle cx="9.0" cy="9.0" r="8.6" fill="#8BCFEA"/><path d="M11.0,6.8 A3.3,3.5 0 1 0 11.0,11.4" fill="none" stroke="#2F3A42" stroke-width="1.5"/></svg>
<div style="left:441px;top:74px;width:14px;height:22px;background:linear-gradient(to right, rgba(242,242,242,0.85), rgba(242,242,242,0.25) 75%, rgba(242,242,242,0));"></div>
<div class="t" style="left:465.5px;top:76.66px;font:normal 400 16px/20px 'Liberation Sans', sans-serif;color:#000;letter-spacing:-0.808px;">UserServiceImpl.java</div>
<svg style="left:609.5px;top:80px;" width="10" height="10" viewBox="0 0 10 10"><path d="M0.5,0.5 L9.5,9.5 M9.5,0.5 L0.5,9.5" stroke="#A8A8A8" stroke-width="1.2"/></svg>
<svg style="left:634.5px;top:75.5px;opacity:1.0" width="19" height="19" viewBox="0 0 19 19"><circle cx="9.0" cy="9.0" r="8.6" fill="#8BCFEA"/><path d="M11.0,6.8 A3.3,3.5 0 1 0 11.0,11.4" fill="none" stroke="#2F3A42" stroke-width="1.5"/><rect x="12" y="13" width="6" height="5" fill="#9A9A9A"/><path d="M13,13 v-1.5 a2,2 0 0 1 4,0 v1.5" fill="none" stroke="#9A9A9A" stroke-width="1.2"/></svg>
<div class="t" style="left:658px;top:76.66px;font:normal 400 16px/20px 'Liberation Sans', sans-serif;color:#000;letter-spacing:-0.729px;">ProxyGenerator.java</div>
<svg style="left:798px;top:80px;" width="10" height="10" viewBox="0 0 10 10"><path d="M0.5,0.5 L9.5,9.5 M9.5,0.5 L0.5,9.5" stroke="#A8A8A8" stroke-width="1.2"/></svg>
<svg style="left:824px;top:76px;opacity:1.0" width="19" height="19" viewBox="0 0 19 19"><circle cx="9.0" cy="9.0" r="8.6" fill="#8BCFEA"/><path d="M11.0,6.8 A3.3,3.5 0 1 0 11.0,11.4" fill="none" stroke="#2F3A42" stroke-width="1.5"/><path d="M12,0 L18,3.5 L12,7 Z" fill="#59A869"/></svg>
<div class="t" style="left:847px;top:76.66px;font:normal 400 16px/20px 'Liberation Sans', sans-serif;color:#2452B8;letter-spacing:-0.325px;">006-spring-framework-demo-aop-proxy-jdk\...\ProxyDemo.java</div>
<svg style="left:1281px;top:80px;" width="10" height="10" viewBox="0 0 10 10"><path d="M0.5,0.5 L9.5,9.5 M9.5,0.5 L0.5,9.5" stroke="#A8A8A8" stroke-width="1.2"/></svg>
<svg style="left:1305px;top:76px;opacity:1.0" width="19" height="19" viewBox="0 0 19 19"><circle cx="9.0" cy="9.0" r="8.6" fill="#8BCFEA"/><path d="M11.0,6.8 A3.3,3.5 0 1 0 11.0,11.4" fill="none" stroke="#2F3A42" stroke-width="1.5"/><ellipse cx="2.6" cy="2.6" rx="3" ry="1.7" transform="rotate(-45 2.6 2.6)" fill="#9A9A9A"/></svg>
<div class="t" style="left:1328.5px;top:76.66px;font:normal 400 16px/20px 'Liberation Sans', sans-serif;color:#8C8C8C;letter-spacing:-1.084px;">$Proxy0.class</div>
<svg style="left:1421.5px;top:80px;" width="10" height="10" viewBox="0 0 10 10"><path d="M0.5,0.5 L9.5,9.5 M9.5,0.5 L0.5,9.5" stroke="#A8A8A8" stroke-width="1.2"/></svg>
<svg style="left:1448px;top:76px;opacity:1.0" width="19" height="19" viewBox="0 0 19 19"><circle cx="9.0" cy="9.0" r="8.6" fill="#8BCFEA"/><path d="M11.0,6.8 A3.3,3.5 0 1 0 11.0,11.4" fill="none" stroke="#2F3A42" stroke-width="1.5"/></svg>
<div class="t" style="left:1471px;top:76.66px;font:normal 400 16px/20px 'Liberation Sans', sans-serif;color:#000;letter-spacing:-0.170px;">006-spring-framework-demo-aop-proxy-jdk\...\UserServiceImpl.java</div>
<div style="left:441px;top:102px;width:1369px;height:33px;background:#FFF8D6;"></div>
<div style="left:441px;top:135px;width:1369px;height:1px;background:#D6D6D0;"></div>
<div style="left:441px;top:136px;width:1369px;height:33px;background:#FFF8D6;"></div>
<div style="left:441px;top:169px;width:1369px;height:1px;background:#D6D6D0;"></div>
<div class="t" style="left:455px;top:110.66px;font:normal 400 16px/20px 'Liberation Sans', sans-serif;color:#000;letter-spacing:-0.652px;">Decompiled .class file, bytecode version: 49.0 (Java 5)</div>
<div class="t" style="left:456px;top:142px;font:italic 700 15px/20px 'Liberation Serif', serif;color:#3a3a3a;letter-spacing:0.5px">.<span style="font-size:17px">i</span>*</div>
<div class="t" style="left:479px;top:144.66px;font:normal 400 16px/20px 'Liberation Sans', sans-serif;color:#000;letter-spacing:-0.399px;">You are editing a file which is ignored</div>
<div style="left:441px;top:170px;width:1369px;height:680px;background:#FFFFFF;"></div>
<div style="left:441px;top:170px;width:71px;height:680px;background:#F1F1F1;"></div>
<div style="left:512px;top:170px;width:1px;height:680px;background:#D8D8D8;"></div>
<div style="left:1720px;top:170px;width:1px;height:680px;background:#E3E3E3;"></div>
<div style="left:441px;top:251px;width:71px;height:27px;background:#FCFAED;"></div>
<div style="left:513px;top:251px;width:1297px;height:27px;background:#FCFAED;"></div>
<div style="left:710px;top:251px;width:70px;height:27px;background:#EDEBFC;"></div>
<div style="left:590px;top:197px;width:30px;height:27px;background:#E4F1E1;"></div>
<div class="t" style="left:456px;top:172.06px;font:normal 400 16.66px/27px 'Liberation Mono', monospace;color:#A8A8A8;letter-spacing:0.000px;">7</div>
<div class="t" style="left:456px;top:199.06px;font:normal 400 16.66px/27px 'Liberation Mono', monospace;color:#A8A8A8;letter-spacing:0.000px;">8</div>
<div class="t" style="left:446px;top:226.06px;font:normal 400 16.66px/27px 'Liberation Mono', monospace;color:#A8A8A8;letter-spacing:0.000px;">14</div>
<div class="t" style="left:446px;top:253.06px;font:normal 400 16.66px/27px 'Liberation Mono', monospace;color:#A8A8A8;letter-spacing:0.000px;">15</div>
<div class="t" style="left:446px;top:280.06px;font:normal 400 16.66px/27px 'Liberation Mono', monospace;color:#A8A8A8;letter-spacing:0.000px;">16</div>
<div class="t" style="left:446px;top:307.06px;font:normal 400 16.66px/27px 'Liberation Mono', monospace;color:#A8A8A8;letter-spacing:0.000px;">17</div>
<div class="t" style="left:446px;top:334.06px;font:normal 400 16.66px/27px 'Liberation Mono', monospace;color:#A8A8A8;letter-spacing:0.000px;">18</div>
<div class="t" style="left:446px;top:361.06px;font:normal 400 16.66px/27px 'Liberation Mono', monospace;color:#A8A8A8;letter-spacing:0.000px;">19</div>
<div class="t" style="left:446px;top:388.06px;font:normal 400 16.66px/27px 'Liberation Mono', monospace;color:#A8A8A8;letter-spacing:0.000px;">20</div>
<div class="t" style="left:446px;top:415.06px;font:normal 400 16.66px/27px 'Liberation Mono', monospace;color:#A8A8A8;letter-spacing:0.000px;">21</div>
<div class="t" style="left:446px;top:442.06px;font:normal 400 16.66px/27px 'Liberation Mono', monospace;color:#A8A8A8;letter-spacing:0.000px;">22</div>
<div class="t" style="left:446px;top:469.06px;font:normal 400 16.66px/27px 'Liberation Mono', monospace;color:#A8A8A8;letter-spacing:0.000px;">23</div>
<div class="t" style="left:446px;top:496.06px;font:normal 400 16.66px/27px 'Liberation Mono', monospace;color:#A8A8A8;letter-spacing:0.000px;">24</div>
<div class="t" style="left:446px;top:523.06px;font:normal 400 16.66px/27px 'Liberation Mono', monospace;color:#A8A8A8;letter-spacing:0.000px;">25</div>
<div class="t" style="left:446px;top:550.06px;font:normal 400 16.66px/27px 'Liberation Mono', monospace;color:#A8A8A8;letter-spacing:0.000px;">26</div>
<div class="t" style="left:446px;top:577.06px;font:normal 400 16.66px/27px 'Liberation Mono', monospace;color:#A8A8A8;letter-spacing:0.000px;">27</div>
<div class="t" style="left:446px;top:604.06px;font:normal 400 16.66px/27px 'Liberation Mono', monospace;color:#A8A8A8;letter-spacing:0.000px;">28</div>
<div class="t" style="left:446px;top:631.06px;font:normal 400 16.66px/27px 'Liberation Mono', monospace;color:#A8A8A8;letter-spacing:0.000px;">29</div>
<div class="t" style="left:446px;top:658.06px;font:normal 400 16.66px/27px 'Liberation Mono', monospace;color:#A8A8A8;letter-spacing:0.000px;">30</div>
<div class="t" style="left:446px;top:685.06px;font:normal 400 16.66px/27px 'Liberation Mono', monospace;color:#A8A8A8;letter-spacing:0.000px;">31</div>
<div class="t" style="left:446px;top:712.06px;font:normal 400 16.66px/27px 'Liberation Mono', monospace;color:#A8A8A8;letter-spacing:0.000px;">32</div>
<div class="t" style="left:446px;top:739.06px;font:normal 400 16.66px/27px 'Liberation Mono', monospace;color:#A8A8A8;letter-spacing:0.000px;">33</div>
<div class="t" style="left:446px;top:766.06px;font:normal 400 16.66px/27px 'Liberation Mono', monospace;color:#A8A8A8;letter-spacing:0.000px;">34</div>
<div class="t" style="left:446px;top:793.06px;font:normal 400 16.66px/27px 'Liberation Mono', monospace;color:#A8A8A8;letter-spacing:0.000px;">35</div>
<div class="t" style="left:446px;top:820.06px;font:normal 400 16.66px/27px 'Liberation Mono', monospace;color:#A8A8A8;letter-spacing:0.000px;">36</div>
<div class="t" style="left:520px;top:199.06px;font:400 16.66px/27px 'Liberation Mono', monospace;white-space:pre"><span style="color:#0033B3">import</span><span style="color:#080808"> ...</span></div>
<div class="t" style="left:520px;top:253.06px;font:400 16.66px/27px 'Liberation Mono', monospace;white-space:pre"><span style="color:#0033B3">public final class </span><span style="color:#080808">$Proxy0 </span><span style="color:#0033B3">extends </span><span style="color:#080808">Proxy </span><span style="color:#0033B3">implements </span><span style="color:#080808">IUserService {</span></div>
<div class="t" style="left:520px;top:280.06px;font:400 16.66px/27px 'Liberation Mono', monospace;white-space:pre"><span style="color:#080808">    </span><span style="color:#0033B3">private static </span><span style="color:#080808">Method </span><span style="color:#871094;font-style:italic">m1</span><span style="color:#080808">;</span></div>
<div class="t" style="left:520px;top:307.06px;font:400 16.66px/27px 'Liberation Mono', monospace;white-space:pre"><span style="color:#080808">    </span><span style="color:#0033B3">private static </span><span style="color:#080808">Method </span><span style="color:#871094;font-style:italic">m3</span><span style="color:#080808">;</span></div>
<div class="t" style="left:520px;top:334.06px;font:400 16.66px/27px 'Liberation Mono', monospace;white-space:pre"><span style="color:#080808">    </span><span style="color:#0033B3">private static </span><span style="color:#080808">Method </span><span style="color:#871094;font-style:italic">m2</span><span style="color:#080808">;</span></div>
<div class="t" style="left:520px;top:361.06px;font:400 16.66px/27px 'Liberation Mono', monospace;white-space:pre"><span style="color:#080808">    </span><span style="color:#0033B3">private static </span><span style="color:#080808">Method </span><span style="color:#871094;font-style:italic">m0</span><span style="color:#080808">;</span></div>
<div class="t" style="left:520px;top:388.06px;font:400 16.66px/27px 'Liberation Mono', monospace;white-space:pre"><span style="color:#080808">    </span><span style="color:#0033B3">private static </span><span style="color:#080808">Method </span><span style="color:#871094;font-style:italic">m4</span><span style="color:#080808">;</span></div>
<div class="t" style="left:520px;top:442.06px;font:400 16.66px/27px 'Liberation Mono', monospace;white-space:pre"><span style="color:#080808">    </span><span style="color:#0033B3">public </span><span style="color:#00627A">$Proxy0</span><span style="color:#080808">(InvocationHandler var1) </span><span style="color:#0033B3">throws</span><span style="color:#080808">  {</span></div>
<div class="t" style="left:520px;top:469.06px;font:400 16.66px/27px 'Liberation Mono', monospace;white-space:pre"><span style="color:#080808">        </span><span style="color:#0033B3">super</span><span style="color:#080808">(var1);</span></div>
<div class="t" style="left:520px;top:496.06px;font:400 16.66px/27px 'Liberation Mono', monospace;white-space:pre"><span style="color:#080808">    }</span></div>
<div class="t" style="left:520px;top:550.06px;font:400 16.66px/27px 'Liberation Mono', monospace;white-space:pre"><span style="color:#080808">    </span><span style="color:#0033B3">public final boolean </span><span style="color:#00627A">equals</span><span style="color:#080808">(Object var1) </span><span style="color:#0033B3">throws</span><span style="color:#080808">  {</span></div>
<div class="t" style="left:520px;top:577.06px;font:400 16.66px/27px 'Liberation Mono', monospace;white-space:pre"><span style="color:#080808">        </span><span style="color:#0033B3">try</span><span style="color:#080808"> {</span></div>
<div class="t" style="left:520px;top:604.06px;font:400 16.66px/27px 'Liberation Mono', monospace;white-space:pre"><span style="color:#080808">            </span><span style="color:#0033B3">return</span><span style="color:#080808"> (Boolean)</span><span style="color:#0033B3">super</span><span style="color:#080808">.</span><span style="color:#871094">h</span><span style="color:#080808">.invoke(</span></div>
<div class="t" style="left:520px;top:631.06px;font:400 16.66px/27px 'Liberation Mono', monospace;white-space:pre"><span style="color:#080808">        } </span><span style="color:#0033B3">catch</span><span style="color:#080808"> (RuntimeException | Error var3) {</span></div>
<div class="t" style="left:520px;top:658.06px;font:400 16.66px/27px 'Liberation Mono', monospace;white-space:pre"><span style="color:#080808">            </span><span style="color:#0033B3">throw</span><span style="color:#080808"> var3;</span></div>
<div class="t" style="left:520px;top:685.06px;font:400 16.66px/27px 'Liberation Mono', monospace;white-space:pre"><span style="color:#080808">        } </span><span style="color:#0033B3">catch</span><span style="color:#080808"> (Throwable var4) {</span></div>
<div class="t" style="left:520px;top:712.06px;font:400 16.66px/27px 'Liberation Mono', monospace;white-space:pre"><span style="color:#080808">            </span><span style="color:#0033B3">throw new </span><span style="color:#080808">UndeclaredThrowableException(var4);</span></div>
<div class="t" style="left:520px;top:739.06px;font:400 16.66px/27px 'Liberation Mono', monospace;white-space:pre"><span style="color:#080808">        }</span></div>
<div class="t" style="left:520px;top:766.06px;font:400 16.66px/27px 'Liberation Mono', monospace;white-space:pre"><span style="color:#080808">    }</span></div>
<div class="t" style="left:520px;top:820.06px;font:400 16.66px/27px 'Liberation Mono', monospace;white-space:pre"><span style="color:#080808">    </span><span style="color:#0033B3">public final </span><span style="color:#080808">List </span><span style="color:#00627A">findUserList</span><span style="color:#080808">() </span><span style="color:#0033B3">throws</span><span style="color:#080808">  {</span></div>
<div style="left:952px;top:606px;width:50px;height:22px;background:#EFEFEF;border-radius:4px"></div>
<div class="t" style="left:958px;top:608.00px;font:normal 400 15px/20px 'Liberation Sans', sans-serif;color:#8C8C8C;letter-spacing:-0.310px;">proxy:</div>
<div class="t" style="left:1004px;top:604.06px;font:400 16.66px/27px 'Liberation Mono', monospace;white-space:pre"><span style="color:#0033B3">this</span><span style="color:#080808">, </span><span style="color:#871094;font-style:italic">m1</span><span style="color:#080808">, </span><span style="color:#0033B3">new </span><span style="color:#080808">Object[]{var1});</span></div>
<div style="left:557px;top:467px;width:1px;height:27px;background:#E6E6E6;"></div>
<div style="left:557px;top:575px;width:1px;height:189px;background:#E6E6E6;"></div>
<div style="left:597px;top:602px;width:1px;height:27px;background:#E6E6E6;"></div>
<div style="left:597px;top:656px;width:1px;height:27px;background:#E6E6E6;"></div>
<div style="left:597px;top:710px;width:1px;height:27px;background:#E6E6E6;"></div>
<div style="left:557px;top:845px;width:1px;height:10px;background:#E6E6E6;"></div>
<svg style="left:507px;top:206px;" width="11" height="11" viewBox="0 0 11 11"><rect x="0.5" y="0.5" width="10" height="10" fill="#FFFFFF" stroke="#C8C8C8"/><path d="M2.5,5.5 h6 M5.5,2.5 v6" stroke="#C8C8C8"/></svg>
<svg style="left:507px;top:449px;" width="11" height="14" viewBox="0 0 11 14"><path d="M0.5,0.5 h10 v8 l-5,5 l-5,-5 z" fill="#FFFFFF" stroke="#CACACA"/><path d="M2.5,5 h6" stroke="#CACACA"/></svg>
<svg style="left:507px;top:557px;" width="11" height="14" viewBox="0 0 11 14"><path d="M0.5,0.5 h10 v8 l-5,5 l-5,-5 z" fill="#FFFFFF" stroke="#CACACA"/><path d="M2.5,5 h6" stroke="#CACACA"/></svg>
<svg style="left:507px;top:584px;" width="11" height="14" viewBox="0 0 11 14"><path d="M0.5,0.5 h10 v8 l-5,5 l-5,-5 z" fill="#FFFFFF" stroke="#CACACA"/><path d="M2.5,5 h6" stroke="#CACACA"/></svg>
<svg style="left:507px;top:827px;" width="11" height="14" viewBox="0 0 11 14"><path d="M0.5,0.5 h10 v8 l-5,5 l-5,-5 z" fill="#FFFFFF" stroke="#CACACA"/><path d="M2.5,5 h6" stroke="#CACACA"/></svg>
<svg style="left:507px;top:500px;" width="11" height="14" viewBox="0 0 11 14"><path d="M0.5,13.5 h10 v-8 l-5,-5 l-5,5 z" fill="#FFFFFF" stroke="#CACACA"/><path d="M2.5,8.5 h6" stroke="#CACACA"/></svg>
<svg style="left:507px;top:635px;" width="11" height="14" viewBox="0 0 11 14"><path d="M0.5,13.5 h10 v-8 l-5,-5 l-5,5 z" fill="#FFFFFF" stroke="#CACACA"/><path d="M2.5,8.5 h6" stroke="#CACACA"/></svg>
<svg style="left:507px;top:689px;" width="11" height="14" viewBox="0 0 11 14"><path d="M0.5,13.5 h10 v-8 l-5,-5 l-5,5 z" fill="#FFFFFF" stroke="#CACACA"/><path d="M2.5,8.5 h6" stroke="#CACACA"/></svg>
<svg style="left:507px;top:743px;" width="11" height="14" viewBox="0 0 11 14"><path d="M0.5,13.5 h10 v-8 l-5,-5 l-5,5 z" fill="#FFFFFF" stroke="#CACACA"/><path d="M2.5,8.5 h6" stroke="#CACACA"/></svg>
<svg style="left:507px;top:770px;" width="11" height="14" viewBox="0 0 11 14"><path d="M0.5,13.5 h10 v-8 l-5,-5 l-5,5 z" fill="#FFFFFF" stroke="#CACACA"/><path d="M2.5,8.5 h6" stroke="#CACACA"/></svg>
<svg style="left:473px;top:554px;" width="18" height="16" viewBox="0 0 18 16"><circle cx="6" cy="8" r="5.5" fill="#40B6E0"/><circle cx="6" cy="8" r="2" fill="none" stroke="#2B3A44" stroke-width="1.2"/><path d="M14,15 v-12" stroke="#E05555" stroke-width="1.5"/><path d="M11,5.5 L14,1 L17,5.5 Z" fill="#E05555"/></svg>
<svg style="left:473px;top:824px;" width="18" height="16" viewBox="0 0 18 16"><circle cx="6" cy="8" r="5.5" fill="#62B543"/><path d="M4.5,5.5 h3 M6,5.5 v5 M4.5,10.5 h3" stroke="#2B3A2B" stroke-width="1.1"/><path d="M14,15 v-12" stroke="#E05555" stroke-width="1.5"/><path d="M11,5.5 L14,1 L17,5.5 Z" fill="#E05555"/></svg>
<svg style="left:1366px;top:840px;" width="34" height="10" viewBox="0 0 34 10"><path d="M4,12 L5,7 Q5.5,5 8,4.6 L25,2.2 Q27.2,2 27.8,4 L29.5,12" stroke="#EE5A3A" stroke-width="3" fill="none"/></svg>
<div style="left:1396px;top:846px;width:151px;height:4px;background:#FFFFFF;border:1px solid #B9C7DC;border-bottom:none;box-sizing:border-box;border-radius:2px 2px 0 0"></div>
</body></html>
